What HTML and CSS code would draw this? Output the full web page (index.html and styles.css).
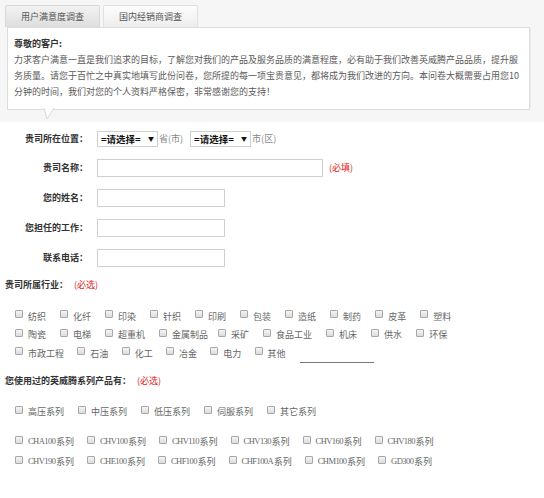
FILE: index.html
```html
<!DOCTYPE html>
<html lang="zh-CN">
<head>
<meta charset="utf-8">
<title>用户满意度调查</title>
<link rel="stylesheet" href="styles.css">
</head>
<body>
<div class="page">
  <div class="top">
    <div class="tabs">
      <div class="tab tab-active">用户满意度调查</div>
      <div class="tab">国内经销商调查</div>
    </div>
    <div class="intro">
      <div class="intro-title">尊敬的客户:</div>
      <p class="intro-text">力求客户满意一直是我们追求的目标，了解您对我们的产品及服务品质的满意程度，必有助于我们改善英威腾产品品质，提升服务质量。请您于百忙之中真实地填写此份问卷，您所提的每一项宝贵意见，都将成为我们改进的方向。本问卷大概需要占用您10分钟的时间，我们对您的个人资料严格保密，非常感谢您的支持！</p>
      <svg class="tail" width="14" height="12" viewBox="0 0 14 12"><polygon points="1,0 4,11 11,0" fill="#fff"/><polyline points="1,0 4,11 11,0" fill="none" stroke="#d8d8d8" stroke-width="1"/></svg>
    </div>
  </div>

  <div class="form">
    <div class="label">贵司所在位置：</div>
    <div class="field field-first">
      <span class="select">=请选择=<span class="arrow">▼</span></span><span class="unit">省(市)</span>
      <span class="select select2">=请选择=<span class="arrow">▼</span></span><span class="unit">市(区)</span>
    </div>
    <div class="label">贵司名称：</div>
    <div class="field"><span class="input input-wide"></span><span class="req">(必填)</span></div>
    <div class="label">您的姓名：</div>
    <div class="field"><span class="input"></span></div>
    <div class="label">您担任的工作：</div>
    <div class="field"><span class="input"></span></div>
    <div class="label">联系电话：</div>
    <div class="field"><span class="input"></span></div>
  </div>

  <div class="section">
    <div class="sec-title">贵司所属行业：<span class="req">(必选)</span></div>
    <div class="checks">
      <div class="row">
        <span class="item"><i class="cb"></i>纺织</span><span class="item"><i class="cb"></i>化纤</span><span class="item"><i class="cb"></i>印染</span><span class="item"><i class="cb"></i>针织</span><span class="item"><i class="cb"></i>印刷</span><span class="item"><i class="cb"></i>包装</span><span class="item"><i class="cb"></i>造纸</span><span class="item"><i class="cb"></i>制药</span><span class="item"><i class="cb"></i>皮革</span><span class="item"><i class="cb"></i>塑料</span>
      </div>
      <div class="row">
        <span class="item"><i class="cb"></i>陶瓷</span><span class="item"><i class="cb"></i>电梯</span><span class="item"><i class="cb"></i>超重机</span><span class="item item-tight"><i class="cb"></i>金属制品</span><span class="item"><i class="cb"></i>采矿</span><span class="item"><i class="cb"></i>食品工业</span><span class="item"><i class="cb"></i>机床</span><span class="item"><i class="cb"></i>供水</span><span class="item"><i class="cb"></i>环保</span>
      </div>
      <div class="row row-last">
        <span class="item"><i class="cb"></i>市政工程</span><span class="item"><i class="cb"></i>石油</span><span class="item"><i class="cb"></i>化工</span><span class="item"><i class="cb"></i>冶金</span><span class="item"><i class="cb"></i>电力</span><span class="item"><i class="cb"></i>其他</span><span class="other-line"></span>
      </div>
    </div>
  </div>

  <div class="section section2">
    <div class="sec-title">您使用过的英威腾系列产品有：<span class="req">(必选)</span></div>
    <div class="checks">
      <div class="row">
        <span class="item"><i class="cb"></i>高压系列</span><span class="item"><i class="cb"></i>中压系列</span><span class="item"><i class="cb"></i>低压系列</span><span class="item"><i class="cb"></i>伺服系列</span><span class="item"><i class="cb"></i>其它系列</span>
      </div>
      <div class="models">
        <div class="row row-model">
          <span class="item"><i class="cb"></i><span class="en">CHA100</span>系列</span><span class="item"><i class="cb"></i><span class="en">CHV100</span>系列</span><span class="item"><i class="cb"></i><span class="en">CHV110</span>系列</span><span class="item"><i class="cb"></i><span class="en">CHV130</span>系列</span><span class="item"><i class="cb"></i><span class="en">CHV160</span>系列</span><span class="item"><i class="cb"></i><span class="en">CHV180</span>系列</span>
        </div>
        <div class="row row-model">
          <span class="item"><i class="cb"></i><span class="en">CHV190</span>系列</span><span class="item"><i class="cb"></i><span class="en">CHE100</span>系列</span><span class="item"><i class="cb"></i><span class="en">CHF100</span>系列</span><span class="item"><i class="cb"></i><span class="en">CHF100A</span>系列</span><span class="item"><i class="cb"></i><span class="en">CHM100</span>系列</span><span class="item"><i class="cb"></i><span class="en">GD300</span>系列</span>
        </div>
      </div>
    </div>
  </div>
</div>
</body>
</html>
```

FILE: styles.css
```css
* { box-sizing: border-box; }
html, body { margin: 0; padding: 0; }
body {
  background: #fff;
  font-family: "Noto Sans CJK SC", "Liberation Sans", sans-serif;
  font-size: 9px;
  color: #555;
  width: 544px;
  height: 498px;
  overflow: hidden;
}
.en {
  font-family: "Liberation Serif", serif;
  font-size: 8.5px;
  letter-spacing: -0.55px;
  line-height: 1;
  margin-right: 0.55px;
}
.top {
  background: #f6f6f6;
  padding: 5px 14px 12px 7px;
}
.tabs {
  display: flex;
  gap: 3px;
  margin-left: -2px;
}
.tab {
  width: 95px;
  height: 22px;
  line-height: 21px;
  text-align: center;
  color: #555;
  border: 1px solid #e0e0e0;
  border-bottom: none;
  border-radius: 2px 2px 0 0;
  background: linear-gradient(#fdfdfd, #ededed);
}
.tab-active {
  background: linear-gradient(#f2f2f2, #dedede);
  border-color: #d8d8d8;
}
.intro {
  position: relative;
  background: #fff;
  border: 1px solid #dcdcdc;
  padding: 8px 8px 9px 6px;
  box-shadow: 3px 0 0 -2px #ececec;
}
.intro-title {
  font-weight: bold;
  color: #333;
  line-height: 16px;
}
.intro-text {
  margin: 0;
  line-height: 16px;
  color: #5a5a5a;
}
.tail {
  position: absolute;
  left: 35px;
  bottom: -11px;
}
.form {
  display: grid;
  grid-template-columns: 88px auto;
  column-gap: 9px;
  row-gap: 13px;
  padding: 9px 0 0 0;
  align-items: center;
}
.label {
  text-align: right;
  font-weight: bold;
  color: #333;
  white-space: nowrap;
  line-height: 13px;
}
.field {
  display: flex;
  align-items: center;
  height: 17px;
}
.field-first { height: 15px; }
.select {
  display: inline-flex;
  align-items: center;
  justify-content: space-between;
  width: 61px;
  height: 16px;
  border: 1px solid #cfcfcf;
  background: #fff;
  padding: 0 3px 0 3px;
  color: #111;
  font-weight: bold;
  font-size: 9.5px;
}
.select2 { margin-left: 7px; }
.arrow { font-size: 6px; }
.unit { color: #888; margin-left: 1px; }
.input {
  display: inline-block;
  width: 128px;
  height: 18px;
  border: 1px solid #cfcfcf;
  background: #fff;
}
.input-wide { width: 226px; }
.req {
  color: #e02020;
  margin-left: 6px;
  font-weight: normal;
}
.section { padding: 12px 0 0 5px; }
.sec-title {
  font-weight: bold;
  color: #333;
  line-height: 14px;
}
.checks { padding: 15px 0 0 10px; }
.row {
  display: flex;
  align-items: center;
  height: 18.5px;
}
.row-model { height: 20px; }
.item {
  display: inline-flex;
  align-items: center;
  margin-right: 14px;
  color: #666;
  white-space: nowrap;
}
.row-last .item { margin-right: 13.3px; }
.item-tight { margin-right: 10px; }
.cb {
  display: inline-block;
  width: 8px;
  height: 8px;
  border: 1px solid #a8a8a8;
  border-radius: 1px;
  background: linear-gradient(#f4f4f4, #dcdcdc);
  margin-right: 5px;
  position: relative;
  top: -2px;
}
.other-line {
  display: inline-block;
  width: 74px;
  border-bottom: 1px solid #777;
  margin-top: 18px;
  margin-left: 1px;
}
.section2 { padding-top: 11px; }
.section2 .checks { padding-top: 15px; }
.models { margin-top: 10.5px; }
.models .item { margin-right: 13px; }
```
